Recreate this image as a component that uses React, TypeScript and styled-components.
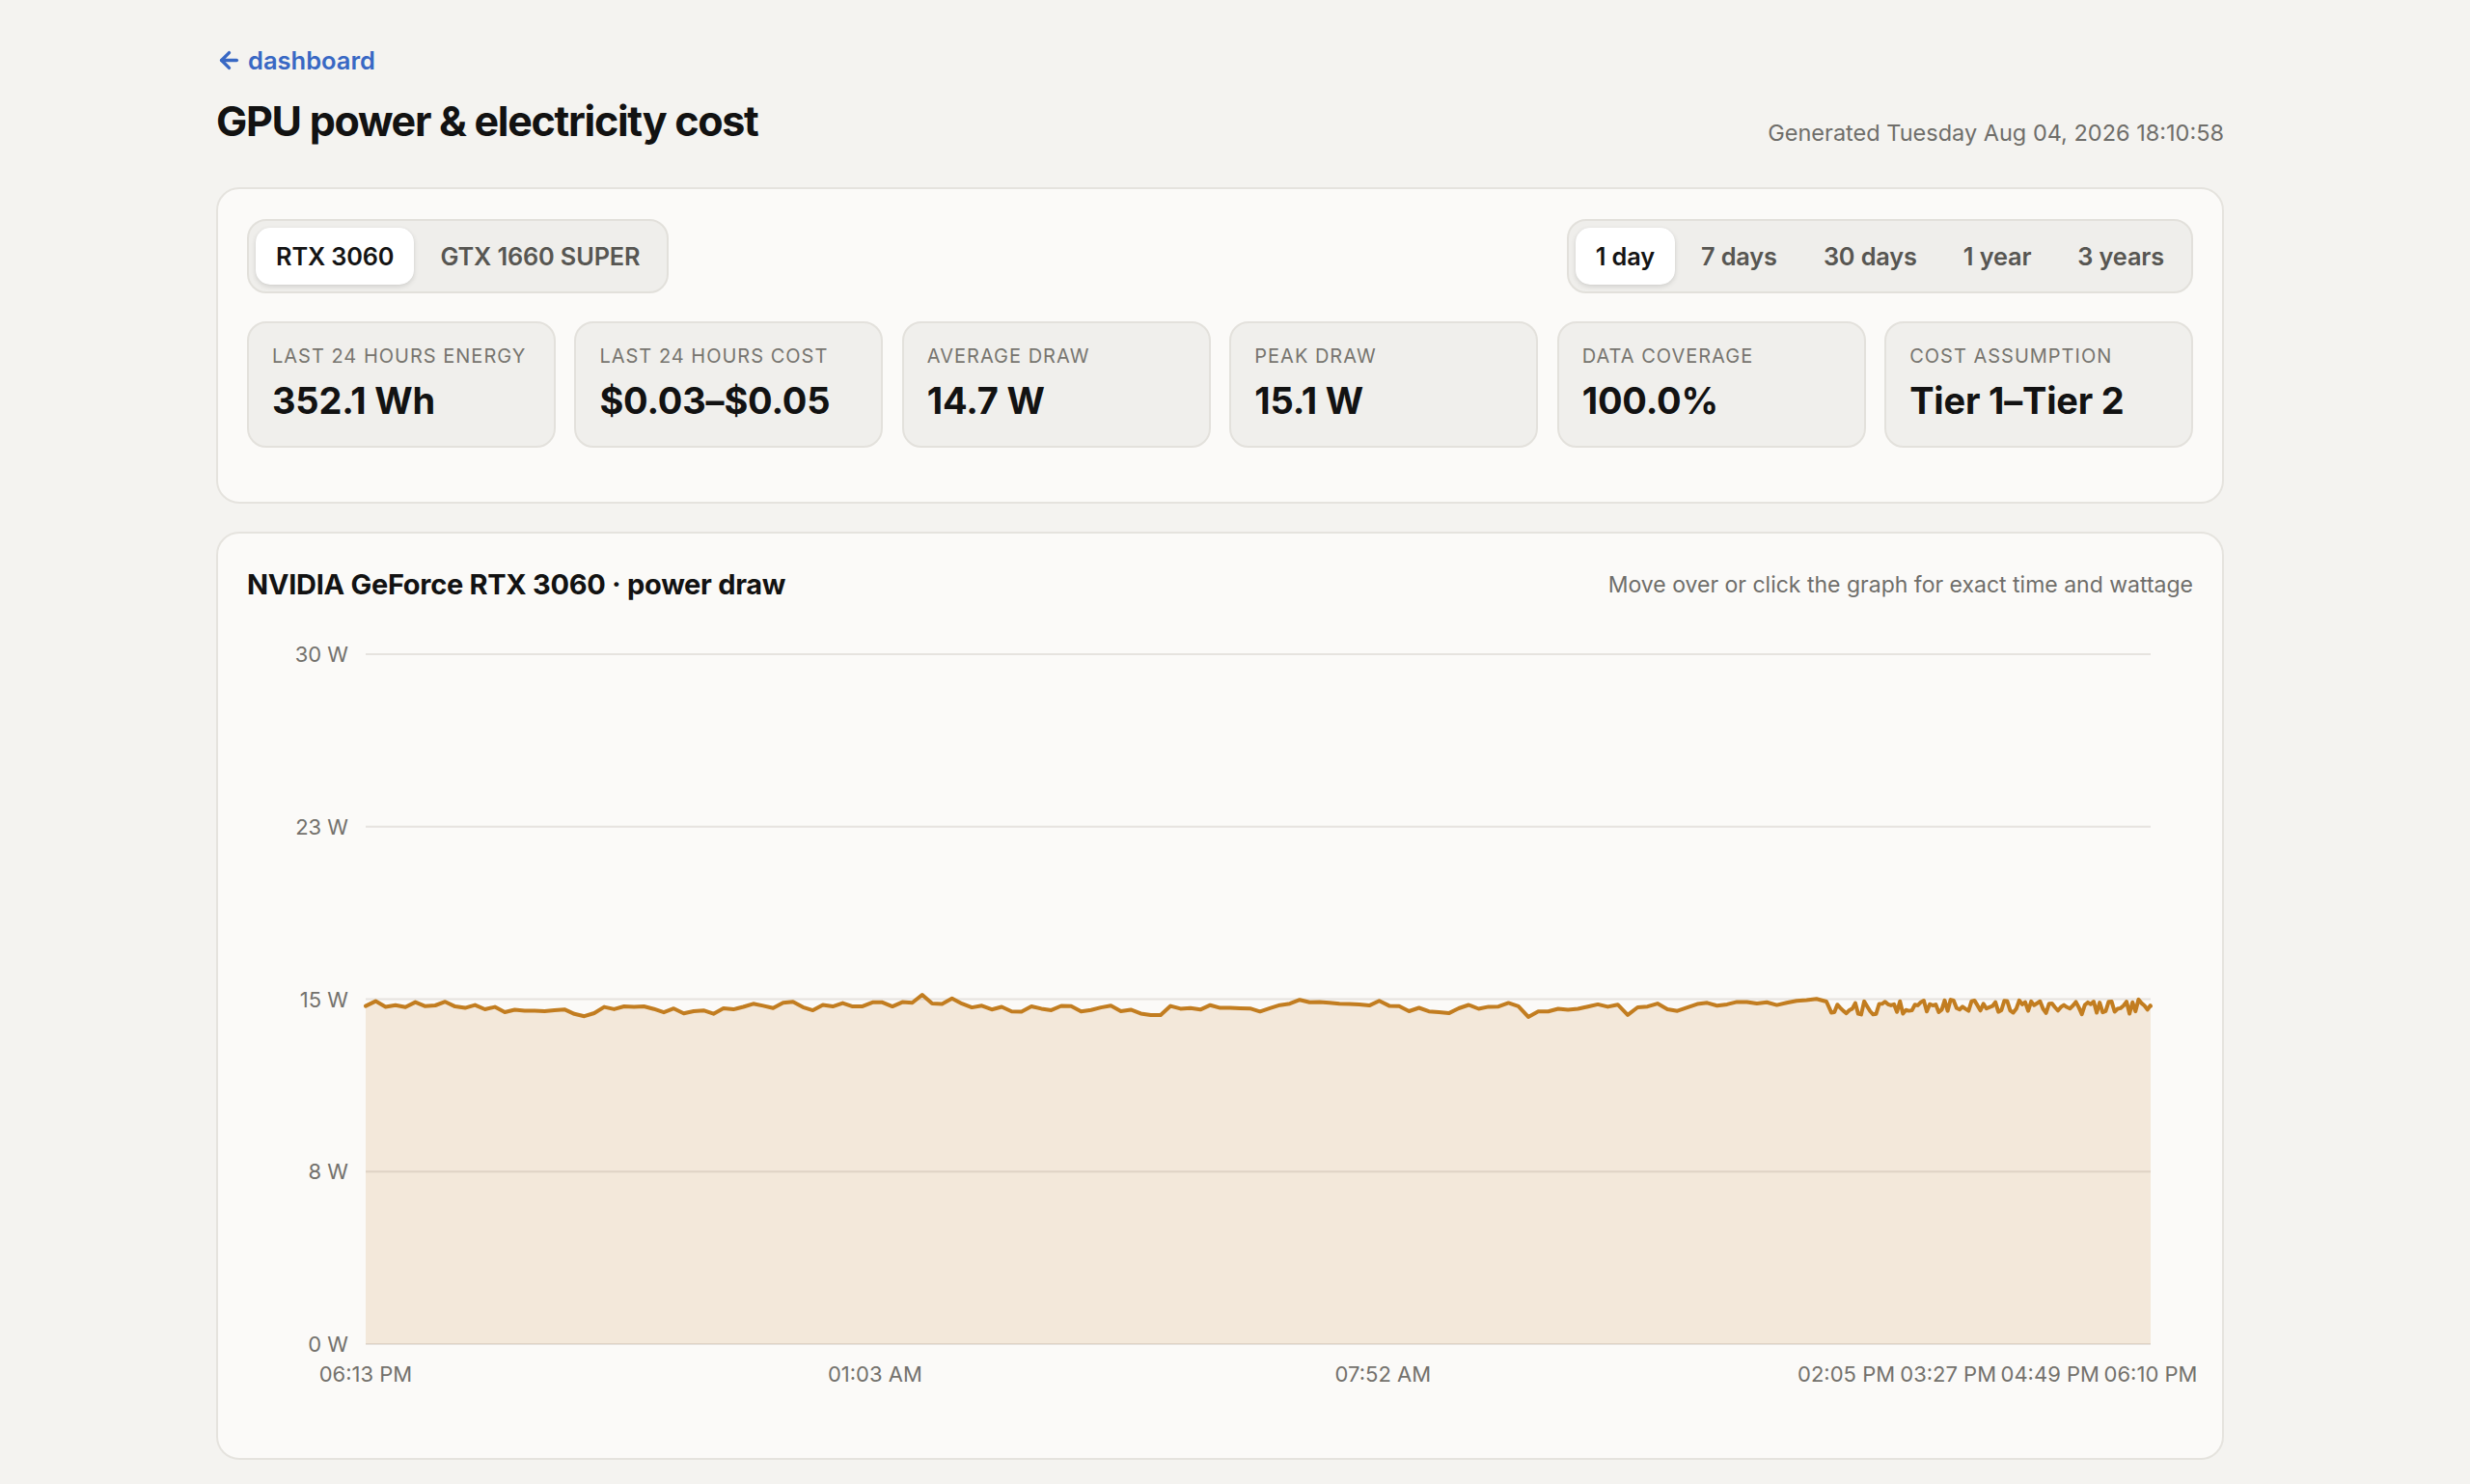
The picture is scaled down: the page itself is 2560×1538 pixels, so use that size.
import React from "react";
import styled, { createGlobalStyle } from "styled-components";
import { ArrowLeft } from "lucide-react";

const GlobalStyle = createGlobalStyle`
  html, body {
    margin: 0;
    padding: 0;
    background: #f4f3f0;
    font-family: Inter, "Noto Sans", "Liberation Sans", sans-serif;
    color: #141414;
    -webkit-font-smoothing: antialiased;
  }
  * { box-sizing: border-box; }
`;

const Page = styled.main`
  width: 2081px;
  margin-left: 224px;
  padding: 47px 0 16px;
  display: flex;
  flex-direction: column;
`;

const BackLink = styled.a`
  display: inline-flex;
  align-items: center;
  gap: 6px;
  align-self: flex-start;
  color: #3868c4;
  font-size: 25.5px;
  font-weight: 600;
  line-height: 31px;
  text-decoration: none;
`;

const HeaderRow = styled.header`
  display: flex;
  justify-content: space-between;
  align-items: flex-end;
  margin-top: 21px;
  margin-bottom: 42px;
`;

const Title = styled.h1`
  margin: 0;
  font-size: 43px;
  line-height: 53px;
  font-weight: 700;
  letter-spacing: -0.03em;
  color: #121212;
`;

const Generated = styled.div`
  font-size: 23.5px;
  line-height: 28px;
  color: #6f6e6a;
`;

const Panel = styled.section<{ $pad: string; $gapTop?: number }>`
  background: #fbfaf8;
  border: 2px solid #e5e3de;
  border-radius: 24px;
  padding: ${(p) => p.$pad};
  margin-top: ${(p) => p.$gapTop ?? 0}px;
`;

const TopRow = styled.div`
  display: flex;
  justify-content: space-between;
  align-items: flex-start;
  margin-bottom: 29px;
`;

const Segmented = styled.div`
  display: flex;
  gap: 6px;
  padding: 7px;
  background: #efeeeb;
  border: 2px solid #e2e0db;
  border-radius: 20px;
`;

const SegButton = styled.button<{ $active?: boolean }>`
  height: 59px;
  padding: 0 21px;
  border: none;
  border-radius: 15px;
  font-family: inherit;
  font-size: 25.3px;
  font-weight: 600;
  letter-spacing: -0.005em;
  cursor: pointer;
  color: ${(p) => (p.$active ? "#141414" : "#575652")};
  background: ${(p) => (p.$active ? "#ffffff" : "transparent")};
  box-shadow: ${(p) =>
    p.$active ? "0 2px 5px rgba(0,0,0,0.13), 0 0 1px rgba(0,0,0,0.08)" : "none"};
`;

const StatGrid = styled.div`
  display: grid;
  grid-template-columns: repeat(6, 1fr);
  gap: 19.6px;
`;

const StatCard = styled.div`
  background: #f0efec;
  border: 2px solid #e3e1dc;
  border-radius: 20px;
  padding: 22px 24px 24px;
  display: flex;
  flex-direction: column;
  gap: 10px;
`;

const StatLabel = styled.div`
  font-size: 20px;
  line-height: 25px;
  letter-spacing: 0.05em;
  text-transform: uppercase;
  color: #77756f;
`;

const StatValue = styled.div`
  font-size: 38px;
  line-height: 46px;
  font-weight: 700;
  letter-spacing: -0.005em;
  color: #121212;
`;

const ChartHeader = styled.div`
  display: flex;
  justify-content: space-between;
  align-items: center;
  margin-bottom: 19px;
`;

const ChartTitle = styled.h2`
  margin: 0;
  font-size: 29px;
  line-height: 35px;
  font-weight: 700;
  letter-spacing: -0.01em;
  color: #121212;
`;

const ChartHint = styled.div`
  font-size: 23px;
  color: #6f6e6a;
`;

const ChartSvg = styled.svg`
  display: block;
  width: 100%;
  height: auto;
  overflow: visible;
  font-family: Inter, "Noto Sans", "Liberation Sans", sans-serif;
`;

/* ---------- chart data ---------- */

const W = 2017;
const H = 800;
const PX0 = 123;
const PX1 = 1973;
const PY0 = 36;
const PY1 = 751;
const TOTAL_MIN = 1437;
const MAX_W = 30;

function makeRng(seed: number) {
  let s = seed >>> 0;
  return () => {
    s = (Math.imul(s, 1664525) + 1013904223) >>> 0;
    return s / 4294967296;
  };
}

function buildSeries() {
  const r = makeRng(20260804);
  const pts: [number, number][] = [];
  let walk = 0;
  for (let m = 0; m < 1180; m += 8) {
    walk = walk * 0.55 + (r() - 0.5) * 0.42;
    const spike = r() > 0.88 ? (r() - 0.5) * 0.7 : 0;
    const v = 14.66 + 0.12 * Math.sin(m / 60 + 1) + walk + spike;
    pts.push([m, v]);
  }
  for (let m = 1180; m <= TOTAL_MIN; m += 2.4) {
    const v = 14.66 + (r() - 0.5) * 0.6 + 0.05 * Math.sin(m / 25);
    pts.push([m, v]);
  }
  pts.push([TOTAL_MIN, 14.7]);
  return pts;
}

const sx = (m: number) => PX0 + (m / TOTAL_MIN) * (PX1 - PX0);
const sy = (v: number) => PY1 - (v / MAX_W) * (PY1 - PY0);

const series = buildSeries();
const linePath = series
  .map(([m, v], i) => `${i === 0 ? "M" : "L"}${sx(m).toFixed(1)},${sy(v).toFixed(1)}`)
  .join(" ");
const areaPath = `${linePath} L${PX1},${PY1} L${PX0},${PY1} Z`;

const yTicks = [
  { v: 30, label: "30 W" },
  { v: 22.5, label: "23 W" },
  { v: 15, label: "15 W" },
  { v: 7.5, label: "8 W" },
  { v: 0, label: "0 W" },
];

const xTicks = [
  { m: 0, label: "06:13 PM" },
  { m: 410, label: "01:03 AM" },
  { m: 819, label: "07:52 AM" },
  { m: 1192, label: "02:05 PM" },
  { m: 1274, label: "03:27 PM" },
  { m: 1356, label: "04:49 PM" },
  { m: 1437, label: "06:10 PM" },
];

const PowerChart: React.FC = () => (
  <ChartSvg viewBox={`0 0 ${W} ${H}`} width={W} height={H}>
    <path d={areaPath} fill="rgba(204,134,46,0.15)" />
    {yTicks.map((t) => (
      <g key={t.label}>
        <line
          x1={PX0}
          x2={PX1}
          y1={sy(t.v)}
          y2={sy(t.v)}
          stroke="rgba(60,50,30,0.11)"
          strokeWidth={2}
        />
        <text
          x={105}
          y={sy(t.v)}
          textAnchor="end"
          dominantBaseline="central"
          fontSize={22}
          fill="#73716c"
        >
          {t.label}
        </text>
      </g>
    ))}
    <path
      d={linePath}
      fill="none"
      stroke="#c27d20"
      strokeWidth={4}
      strokeLinejoin="round"
      strokeLinecap="round"
    />
    {xTicks.map((t) => (
      <text
        key={t.label}
        x={sx(t.m)}
        y={782}
        textAnchor="middle"
        dominantBaseline="central"
        fontSize={22}
        fill="#73716c"
      >
        {t.label}
      </text>
    ))}
  </ChartSvg>
);

const gpus = ["RTX 3060", "GTX 1660 SUPER"];
const ranges = ["1 day", "7 days", "30 days", "1 year", "3 years"];
const stats = [
  { label: "Last 24 hours energy", value: "352.1 Wh" },
  { label: "Last 24 hours cost", value: "$0.03–$0.05" },
  { label: "Average draw", value: "14.7 W" },
  { label: "Peak draw", value: "15.1 W" },
  { label: "Data coverage", value: "100.0%" },
  { label: "Cost assumption", value: "Tier 1–Tier 2" },
];

export default function App() {
  return (
    <>
      <GlobalStyle />
      <Page>
        <BackLink href="#">
          <ArrowLeft size={27} strokeWidth={3} />
          dashboard
        </BackLink>
        <HeaderRow>
          <Title>GPU power &amp; electricity cost</Title>
          <Generated>Generated Tuesday Aug 04, 2026 18:10:58</Generated>
        </HeaderRow>

        <Panel $pad="31px 30px 56px">
          <TopRow>
            <Segmented>
              {gpus.map((g, i) => (
                <SegButton key={g} $active={i === 0}>
                  {g}
                </SegButton>
              ))}
            </Segmented>
            <Segmented>
              {ranges.map((r, i) => (
                <SegButton key={r} $active={i === 0}>
                  {r}
                </SegButton>
              ))}
            </Segmented>
          </TopRow>
          <StatGrid>
            {stats.map((s) => (
              <StatCard key={s.label}>
                <StatLabel>{s.label}</StatLabel>
                <StatValue>{s.value}</StatValue>
              </StatCard>
            ))}
          </StatGrid>
        </Panel>

        <Panel $pad="35px 30px 69px" $gapTop={29}>
          <ChartHeader>
            <ChartTitle>NVIDIA GeForce RTX 3060 · power draw</ChartTitle>
            <ChartHint>Move over or click the graph for exact time and wattage</ChartHint>
          </ChartHeader>
          <PowerChart />
        </Panel>
      </Page>
    </>
  );
}
